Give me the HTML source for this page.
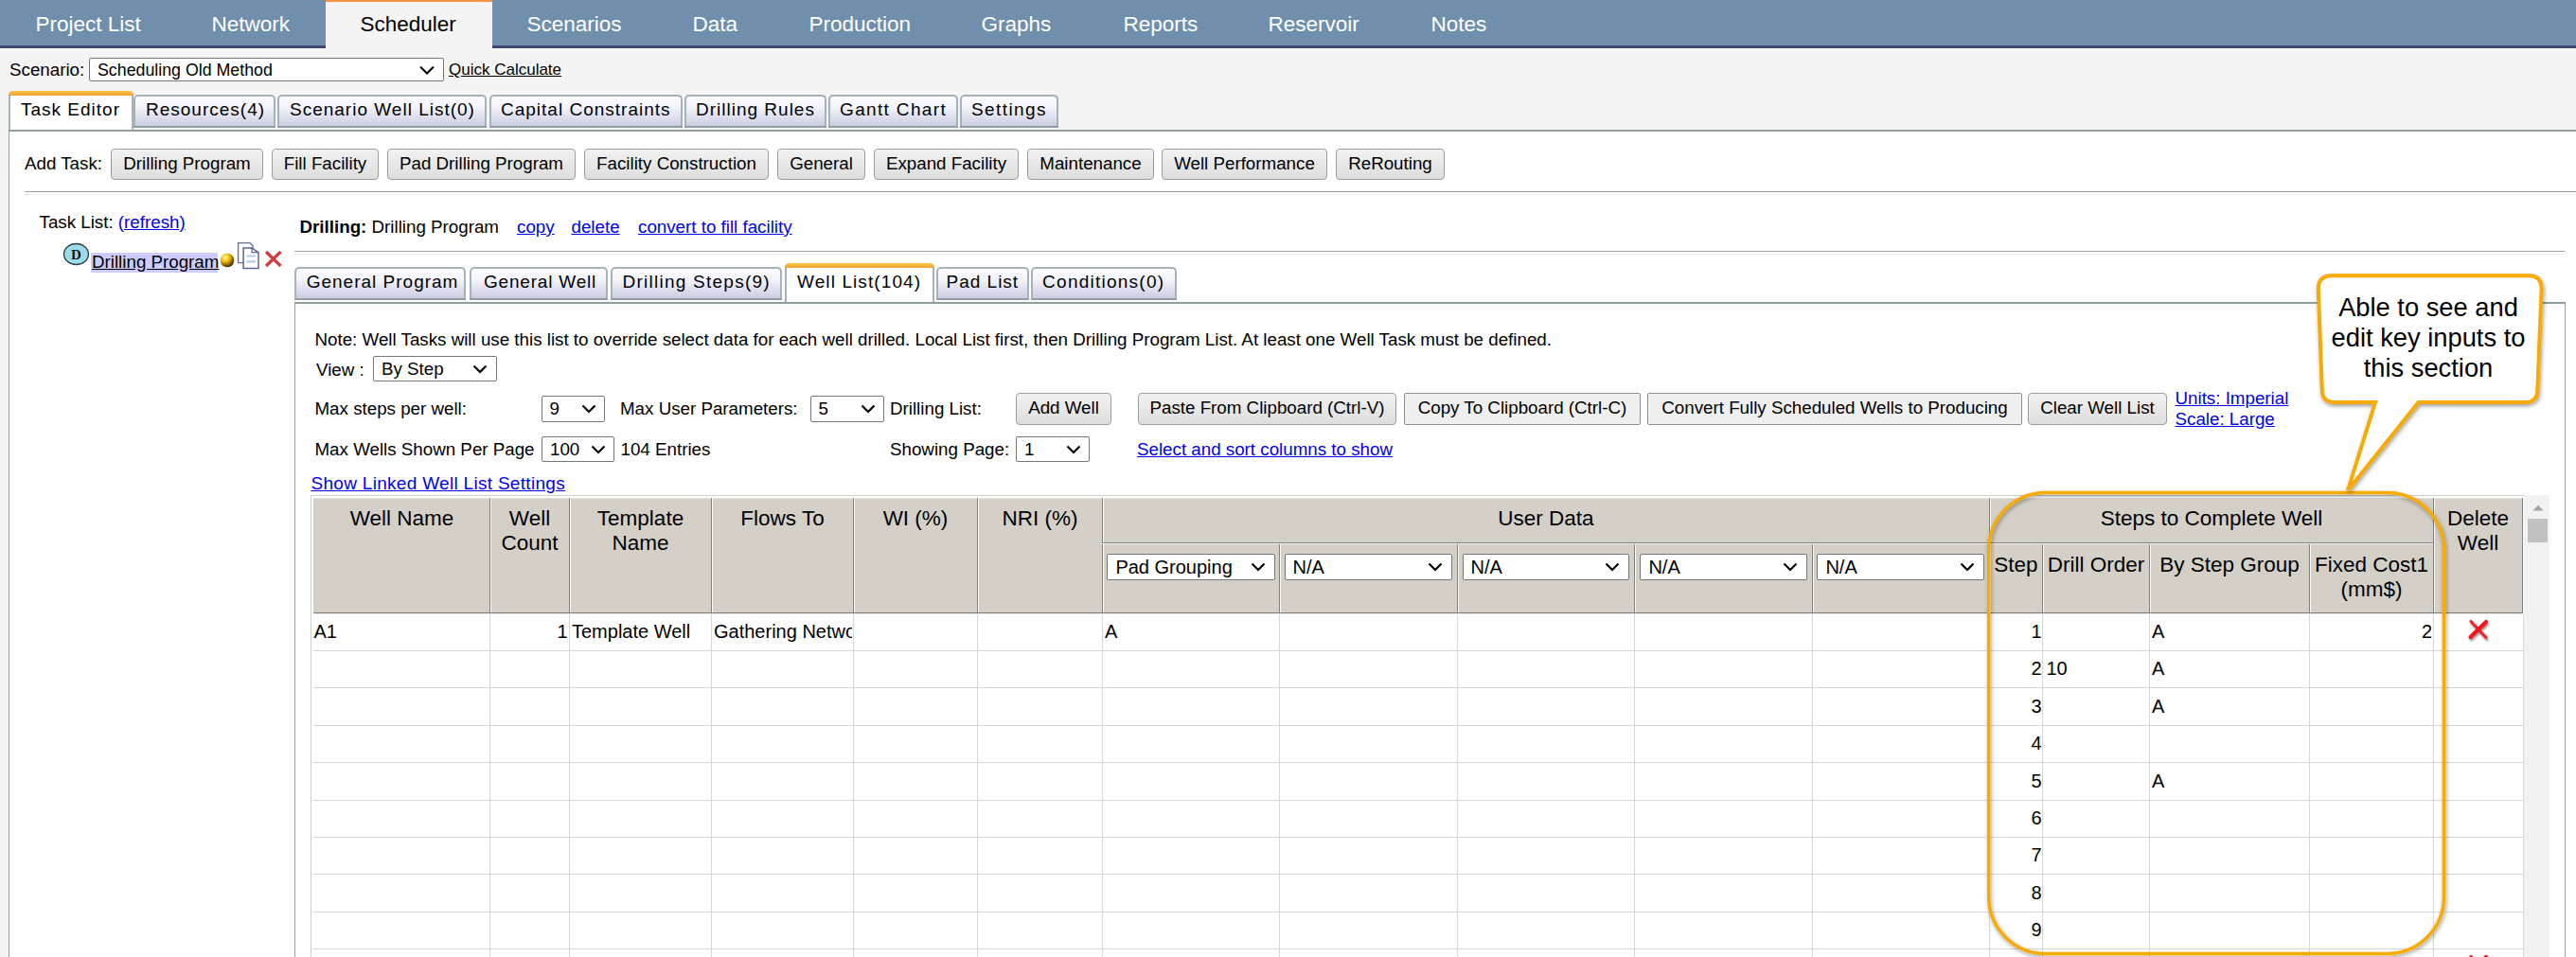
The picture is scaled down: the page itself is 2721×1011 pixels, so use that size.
<!DOCTYPE html>
<html><head><meta charset="utf-8">
<style>
*{box-sizing:border-box;margin:0;padding:0}
html,body{width:2721px;height:1011px;overflow:hidden;background:#f4f4f4;font-family:"Liberation Sans",sans-serif;color:#000}
.a{position:absolute}
.t{position:absolute;white-space:nowrap;line-height:1;font-size:18.75px}
.nav{font-size:22.5px;color:#fff;margin:1px 0 0 0.5px}
.tab{position:absolute;border:2px solid #a3b3b8;border-bottom:none;border-radius:5px 5px 0 0;background:linear-gradient(#fbfbff 0%,#f3f3fb 35%,#c7c8df 100%)}
.tab:after{content:"";position:absolute;left:-2px;right:-2px;bottom:0;height:2px;background:#8f9e9f}
.tabsel{position:absolute;border-left:2px solid #a3b3b8;border-right:2px solid #a3b3b8;background:#fff;border-radius:5px 5px 0 0}
.tabsel:before{content:"";position:absolute;left:-2px;right:-2px;top:0;height:5px;border-radius:5px 5px 0 0;background:linear-gradient(#f9c545,#f0a030)}
.tt{position:absolute;white-space:nowrap;line-height:1;font-size:19px;letter-spacing:1px}
.btn{position:absolute;border:1px solid #9d9d9d;border-radius:4px;background:linear-gradient(#f2f2f2,#dddddd);font-size:18.75px;display:flex;align-items:center;justify-content:center;white-space:nowrap;color:#000;padding-bottom:2px}
.btnf{position:absolute;border:1px solid #8f8f8f;border-radius:2px;background:#efefef;font-size:18.75px;display:flex;align-items:center;justify-content:center;white-space:nowrap;padding-bottom:2px}
.sel{position:absolute;border:1px solid #767676;border-radius:2px;background:#fff;font-size:18.75px;white-space:nowrap}
.sel span{position:absolute;top:50%;transform:translateY(-50%);line-height:1}
.sel svg{position:absolute;top:50%;margin-top:-5px}
.lnk{color:#0000ee;text-decoration:underline}
.hl{position:absolute;background:#a0a0a0}
</style></head><body>

<!-- NAV -->
<div class="a" style="left:0;top:0;width:2721px;height:48px;background:#6f8fac"></div>
<div class="a" style="left:0;top:48px;width:2721px;height:3px;background:#3b4a72"></div>
<div class="a" style="left:344px;top:0;width:176px;height:51px;background:#f4f4f4;border-top:2px solid #f39440"></div>
<span class="t nav" style="left:37px;top:14px">Project List</span>
<span class="t nav" style="left:223px;top:14px">Network</span>
<span class="t nav" style="left:380px;top:14px;color:#000">Scheduler</span>
<span class="t nav" style="left:556px;top:14px">Scenarios</span>
<span class="t nav" style="left:731px;top:14px">Data</span>
<span class="t nav" style="left:854px;top:14px">Production</span>
<span class="t nav" style="left:1036px;top:14px">Graphs</span>
<span class="t nav" style="left:1186px;top:14px">Reports</span>
<span class="t nav" style="left:1339px;top:14px">Reservoir</span>
<span class="t nav" style="left:1511px;top:14px">Notes</span>

<!-- SCENARIO ROW -->
<span class="t" style="left:10px;top:65px">Scenario:</span>
<div class="sel" style="left:94px;top:61px;width:375px;height:25px"><span style="left:8px;font-size:17.8px;margin-top:1px">Scheduling Old Method</span><svg style="right:9px" width="16" height="10" viewBox="0 0 16 10"><path d="M1 1.5 L8 8.5 L15 1.5" fill="none" stroke="#000" stroke-width="2"/></svg></div>
<span class="t" style="left:474px;top:65px;font-size:17px;text-decoration:underline">Quick Calculate</span>

<!-- TOP TABS -->
<div class="a" style="left:9px;top:137px;width:2712px;height:2px;background:#8f9e9f"></div>
<div class="a" style="left:9px;top:139px;width:2712px;height:872px;background:#fff;border-left:1px solid #a0a0a0"></div>
<div class="tabsel" style="left:9px;top:96px;width:132px;height:41px"></div>
<span class="tt" style="left:22px;top:106px">Task Editor</span>
<div class="tab" style="left:141px;top:100px;width:150px;height:35px"></div>
<span class="tt" style="left:154px;top:106px">Resources(4)</span>
<div class="tab" style="left:293px;top:100px;width:221px;height:35px"></div>
<span class="tt" style="left:306px;top:106px">Scenario Well List(0)</span>
<div class="tab" style="left:517px;top:100px;width:204px;height:35px"></div>
<span class="tt" style="left:529px;top:106px">Capital Constraints</span>
<div class="tab" style="left:723px;top:100px;width:150px;height:35px"></div>
<span class="tt" style="left:735px;top:106px">Drilling Rules</span>
<div class="tab" style="left:875px;top:100px;width:137px;height:35px"></div>
<span class="tt" style="left:887px;top:106px;letter-spacing:1.35px">Gantt Chart</span>
<div class="tab" style="left:1014px;top:100px;width:104px;height:35px"></div>
<span class="tt" style="left:1026px;top:106px;letter-spacing:1.4px">Settings</span>

<!-- ADD TASK -->
<span class="t" style="left:26px;top:164px">Add Task:</span>
<div class="btn" style="left:117px;top:157px;width:161px;height:33px">Drilling Program</div>
<div class="btn" style="left:287px;top:157px;width:113px;height:33px">Fill Facility</div>
<div class="btn" style="left:409px;top:157px;width:199px;height:33px">Pad Drilling Program</div>
<div class="btn" style="left:617px;top:157px;width:195px;height:33px">Facility Construction</div>
<div class="btn" style="left:821px;top:157px;width:93px;height:33px">General</div>
<div class="btn" style="left:923px;top:157px;width:153px;height:33px">Expand Facility</div>
<div class="btn" style="left:1085px;top:157px;width:134px;height:33px">Maintenance</div>
<div class="btn" style="left:1227px;top:157px;width:175px;height:33px">Well Performance</div>
<div class="btn" style="left:1411px;top:157px;width:115px;height:33px">ReRouting</div>
<div class="a" style="left:26px;top:202px;width:2695px;height:1px;background:#a0a0a0"></div>
<div class="a" style="left:26px;top:205px;width:2695px;height:1px;background:#ececec"></div>


<!--CONTENT-->
<span class="t" style="left:41.5px;top:225.5px">Task List: <span class="lnk">(refresh)</span></span>
<svg class="a" style="left:66px;top:255.5px" width="30" height="26" viewBox="0 0 30 26"><ellipse cx="14.5" cy="12.5" rx="13" ry="11" fill="#9cdcea" stroke="#2a3a3a" stroke-width="1.3"/><text x="14.5" y="17.5" text-anchor="middle" font-family="Liberation Serif" font-weight="bold" font-size="15" fill="#111">D</text></svg>
<div class="a" style="left:96px;top:267px;width:134px;height:21px;background:#ccccff"></div>
<span class="t" style="left:97px;top:267.5px;font-size:18.75px;text-decoration:underline">Drilling Program</span>
<svg class="a" style="left:232px;top:267px" width="16" height="16" viewBox="0 0 16 16"><defs><radialGradient id="yb" cx="0.36" cy="0.3" r="0.78"><stop offset="0" stop-color="#ffffff"/><stop offset="0.13" stop-color="#ffe46a"/><stop offset="0.42" stop-color="#f3b600"/><stop offset="0.75" stop-color="#7a5600"/><stop offset="1" stop-color="#0c0800"/></radialGradient></defs><circle cx="8" cy="8" r="7.3" fill="url(#yb)"/></svg>
<svg class="a" style="left:250px;top:255px" width="25" height="30" viewBox="0 0 25 30"><path d="M1.6 1.6 H14 L17 4.6 V22.6 H1.6 Z" fill="#fff" stroke="#6470a0" stroke-width="1.4"/><path d="M7.1 7.1 H16 L23 11.6 V28.6 H7.1 Z" fill="#fff" stroke="#5c6690" stroke-width="1.5"/><path d="M16 7.1 V11.6 H23" fill="none" stroke="#5c6690" stroke-width="1.2"/><path d="M10.5 15.5 H20 M10.5 21.3 H20" stroke="#b0cce6" stroke-width="2.2"/></svg>
<svg class="a" style="left:279px;top:264px" width="20" height="19" viewBox="0 0 20 19"><path d="M2 2 L17.5 17 M17.5 2 L2 17" stroke="#d23c3c" stroke-width="3.2"/></svg>
<span class="t" style="left:316.5px;top:230.5px"><b>Drilling:</b> Drilling Program</span>
<span class="t lnk" style="left:546px;top:230.5px">copy</span>
<span class="t lnk" style="left:603.5px;top:230.5px">delete</span>
<span class="t lnk" style="left:674px;top:230.5px">convert to fill facility</span>
<div class="a" style="left:311px;top:265px;width:2398px;height:1px;background:#a0a0a0"></div>
<div class="a" style="left:311px;top:268px;width:2398px;height:1px;background:#ececec"></div>
<div class="a" style="left:311px;top:319px;width:2399px;height:2px;background:#8f9e9f"></div>
<div class="a" style="left:311px;top:321px;width:1px;height:690px;background:#a0a0a0"></div>
<div class="a" style="left:2709px;top:321px;width:1px;height:690px;background:#a0a0a0"></div>
<div class="tab" style="left:311px;top:282px;width:181px;height:35px"></div>
<span class="tt" style="left:323.7px;top:288px;letter-spacing:1px">General Program</span>
<div class="tab" style="left:496px;top:282px;width:146px;height:35px"></div>
<span class="tt" style="left:511.0px;top:288px;letter-spacing:0.8px">General Well</span>
<div class="tab" style="left:645.4px;top:282px;width:180.60000000000002px;height:35px"></div>
<span class="tt" style="left:657.5px;top:288px;letter-spacing:1.25px">Drilling Steps(9)</span>
<div class="tabsel" style="left:828.5px;top:278px;width:158.0px;height:41px"></div>
<span class="tt" style="left:842.0px;top:288px;letter-spacing:1.1px">Well List(104)</span>
<div class="tab" style="left:988.5px;top:282px;width:98.09999999999991px;height:35px"></div>
<span class="tt" style="left:999.5px;top:288px;letter-spacing:1px">Pad List</span>
<div class="tab" style="left:1089.3px;top:282px;width:153.70000000000005px;height:35px"></div>
<span class="tt" style="left:1101.1px;top:288px;letter-spacing:1.25px">Conditions(0)</span>
<span class="t" style="left:332.5px;top:350px">Note: Well Tasks will use this list to override select data for each well drilled. Local List first, then Drilling Program List. At least one Well Task must be defined.</span>
<span class="t" style="left:334px;top:381.5px">View :</span>
<div class="sel" style="left:394px;top:376px;width:131px;height:27px"><span style="left:8px">By Step</span><svg style="right:9px" width="16" height="10" viewBox="0 0 16 10"><path d="M1.5 1.5 L8 8 L14.5 1.5" fill="none" stroke="#000" stroke-width="2.2"/></svg></div>
<span class="t" style="left:332.5px;top:423px">Max steps per well:</span>
<div class="sel" style="left:572px;top:418px;width:67px;height:28px"><span style="left:7.5px">9</span><svg style="right:8px" width="16" height="10" viewBox="0 0 16 10"><path d="M1.5 1.5 L8 8 L14.5 1.5" fill="none" stroke="#000" stroke-width="2.2"/></svg></div>
<span class="t" style="left:655px;top:423px">Max User Parameters:</span>
<div class="sel" style="left:856px;top:418px;width:78px;height:28px"><span style="left:7.5px">5</span><svg style="right:8px" width="16" height="10" viewBox="0 0 16 10"><path d="M1.5 1.5 L8 8 L14.5 1.5" fill="none" stroke="#000" stroke-width="2.2"/></svg></div>
<span class="t" style="left:940px;top:423px">Drilling List:</span>
<div class="btn" style="left:1073px;top:415px;width:101px;height:34px">Add Well</div>
<div class="btn" style="left:1202px;top:415px;width:273px;height:34px">Paste From Clipboard (Ctrl-V)</div>
<div class="btnf" style="left:1483px;top:415px;width:250px;height:34px">Copy To Clipboard (Ctrl-C)</div>
<div class="btnf" style="left:1740px;top:415px;width:396px;height:34px">Convert Fully Scheduled Wells to Producing</div>
<div class="btn" style="left:2142px;top:415px;width:147px;height:34px">Clear Well List</div>
<span class="t lnk" style="left:2297.5px;top:411.5px">Units: Imperial</span>
<span class="t lnk" style="left:2297.5px;top:433.5px">Scale: Large</span>
<span class="t" style="left:332.5px;top:465.5px">Max Wells Shown Per Page</span>
<div class="sel" style="left:572px;top:461px;width:77px;height:27px"><span style="left:8px">100</span><svg style="right:8px" width="16" height="10" viewBox="0 0 16 10"><path d="M1.5 1.5 L8 8 L14.5 1.5" fill="none" stroke="#000" stroke-width="2.2"/></svg></div>
<span class="t" style="left:655.5px;top:465.5px">104 Entries</span>
<span class="t" style="left:940px;top:466px">Showing Page:</span>
<div class="sel" style="left:1073px;top:461px;width:78px;height:27px"><span style="left:8px">1</span><svg style="right:8px" width="16" height="10" viewBox="0 0 16 10"><path d="M1.5 1.5 L8 8 L14.5 1.5" fill="none" stroke="#000" stroke-width="2.2"/></svg></div>
<span class="t lnk" style="left:1201px;top:466px">Select and sort columns to show</span>
<span class="t lnk" style="left:328.5px;top:501px;font-size:19px;letter-spacing:0.3px">Show Linked Well List Settings</span>
<!--/CONTENT-->
<!--TABLE-->
<div class="a" style="left:328px;top:523px;width:2338px;height:1px;background:#cfcfcf"></div>
<div class="a" style="left:328px;top:523px;width:1px;height:488px;background:#cfcfcf"></div>
<div class="a" style="left:331px;top:526px;width:2334px;height:122px;background:#d4d0c8"></div>
<div class="a" style="left:331px;top:647px;width:2334px;height:1px;background:#7f7f7f"></div>
<div class="a" style="left:331px;top:648px;width:2334px;height:1px;background:#ebe8e2"></div>
<div class="a" style="left:331px;top:526px;width:2334px;height:1px;background:#e4e2dc"></div>
<div class="a" style="left:517px;top:526px;width:1px;height:121px;background:#808080"></div>
<div class="a" style="left:518px;top:526px;width:1px;height:121px;background:#fbfaf8"></div>
<div class="a" style="left:601px;top:526px;width:1px;height:121px;background:#808080"></div>
<div class="a" style="left:602px;top:526px;width:1px;height:121px;background:#fbfaf8"></div>
<div class="a" style="left:751px;top:526px;width:1px;height:121px;background:#808080"></div>
<div class="a" style="left:752px;top:526px;width:1px;height:121px;background:#fbfaf8"></div>
<div class="a" style="left:901px;top:526px;width:1px;height:121px;background:#808080"></div>
<div class="a" style="left:902px;top:526px;width:1px;height:121px;background:#fbfaf8"></div>
<div class="a" style="left:1032px;top:526px;width:1px;height:121px;background:#808080"></div>
<div class="a" style="left:1033px;top:526px;width:1px;height:121px;background:#fbfaf8"></div>
<div class="a" style="left:1164px;top:526px;width:1px;height:121px;background:#808080"></div>
<div class="a" style="left:1165px;top:526px;width:1px;height:121px;background:#fbfaf8"></div>
<div class="a" style="left:2101px;top:526px;width:1px;height:121px;background:#808080"></div>
<div class="a" style="left:2102px;top:526px;width:1px;height:121px;background:#fbfaf8"></div>
<div class="a" style="left:2570px;top:526px;width:1px;height:121px;background:#808080"></div>
<div class="a" style="left:2571px;top:526px;width:1px;height:121px;background:#fbfaf8"></div>
<div class="a" style="left:2664px;top:526px;width:1px;height:121px;background:#808080"></div>
<div class="a" style="left:1351px;top:574px;width:1px;height:73px;background:#808080"></div>
<div class="a" style="left:1352px;top:574px;width:1px;height:73px;background:#fbfaf8"></div>
<div class="a" style="left:1539px;top:574px;width:1px;height:73px;background:#808080"></div>
<div class="a" style="left:1540px;top:574px;width:1px;height:73px;background:#fbfaf8"></div>
<div class="a" style="left:1726px;top:574px;width:1px;height:73px;background:#808080"></div>
<div class="a" style="left:1727px;top:574px;width:1px;height:73px;background:#fbfaf8"></div>
<div class="a" style="left:1914px;top:574px;width:1px;height:73px;background:#808080"></div>
<div class="a" style="left:1915px;top:574px;width:1px;height:73px;background:#fbfaf8"></div>
<div class="a" style="left:2157px;top:574px;width:1px;height:73px;background:#808080"></div>
<div class="a" style="left:2158px;top:574px;width:1px;height:73px;background:#fbfaf8"></div>
<div class="a" style="left:2270px;top:574px;width:1px;height:73px;background:#808080"></div>
<div class="a" style="left:2271px;top:574px;width:1px;height:73px;background:#fbfaf8"></div>
<div class="a" style="left:2439px;top:574px;width:1px;height:73px;background:#808080"></div>
<div class="a" style="left:2440px;top:574px;width:1px;height:73px;background:#fbfaf8"></div>
<div class="a" style="left:1164px;top:573px;width:1406px;height:1px;background:#808080"></div>
<div class="a" style="left:1164px;top:574px;width:1406px;height:1px;background:#f4f3f0"></div>
<div class="a h" style="left:332px;top:534.5px;width:185px;text-align:center;font-size:22.5px;line-height:26px;white-space:nowrap">Well Name</div>
<div class="a h" style="left:518px;top:534.5px;width:83px;text-align:center;font-size:22.5px;line-height:26px;white-space:nowrap">Well<br>Count</div>
<div class="a h" style="left:602px;top:534.5px;width:149px;text-align:center;font-size:22.5px;line-height:26px;white-space:nowrap">Template<br>Name</div>
<div class="a h" style="left:752px;top:534.5px;width:149px;text-align:center;font-size:22.5px;line-height:26px;white-space:nowrap">Flows To</div>
<div class="a h" style="left:902px;top:534.5px;width:130px;text-align:center;font-size:22.5px;line-height:26px;white-space:nowrap">WI (%)</div>
<div class="a h" style="left:1033px;top:534.5px;width:131px;text-align:center;font-size:22.5px;line-height:26px;white-space:nowrap">NRI (%)</div>
<div class="a h" style="left:1165px;top:534.5px;width:936px;text-align:center;font-size:22.5px;line-height:26px;white-space:nowrap">User Data</div>
<div class="a h" style="left:2102px;top:534.5px;width:468px;text-align:center;font-size:22.5px;line-height:26px;white-space:nowrap">Steps to Complete Well</div>
<div class="a h" style="left:2571px;top:534.5px;width:93px;text-align:center;font-size:22.5px;line-height:26px;white-space:nowrap">Delete<br>Well</div>
<div class="a h" style="left:2102px;top:583.5px;width:55px;text-align:center;font-size:22.5px;line-height:26px;white-space:nowrap">Step</div>
<div class="a h" style="left:2158px;top:583.5px;width:112px;text-align:center;font-size:22.5px;line-height:26px;white-space:nowrap">Drill Order</div>
<div class="a h" style="left:2271px;top:583.5px;width:168px;text-align:center;font-size:22.5px;line-height:26px;white-space:nowrap">By Step Group</div>
<div class="a h" style="left:2440px;top:583.5px;width:130px;text-align:center;font-size:22.5px;line-height:26px;white-space:nowrap">Fixed Cost1<br>(mm$)</div>
<div class="sel" style="left:1169.4px;top:585px;width:177.2px;height:28px;font-size:20px"><span style="left:8px">Pad Grouping</span><svg style="right:9px" width="16" height="10" viewBox="0 0 16 10"><path d="M1.5 1.5 L8 8 L14.5 1.5" fill="none" stroke="#000" stroke-width="2.2"/></svg></div>
<div class="sel" style="left:1356.6px;top:585px;width:177.4px;height:28px;font-size:20px"><span style="left:8px">N/A</span><svg style="right:9px" width="16" height="10" viewBox="0 0 16 10"><path d="M1.5 1.5 L8 8 L14.5 1.5" fill="none" stroke="#000" stroke-width="2.2"/></svg></div>
<div class="sel" style="left:1544.5px;top:585px;width:176.9px;height:28px;font-size:20px"><span style="left:8px">N/A</span><svg style="right:9px" width="16" height="10" viewBox="0 0 16 10"><path d="M1.5 1.5 L8 8 L14.5 1.5" fill="none" stroke="#000" stroke-width="2.2"/></svg></div>
<div class="sel" style="left:1732.4px;top:585px;width:176.6px;height:28px;font-size:20px"><span style="left:8px">N/A</span><svg style="right:9px" width="16" height="10" viewBox="0 0 16 10"><path d="M1.5 1.5 L8 8 L14.5 1.5" fill="none" stroke="#000" stroke-width="2.2"/></svg></div>
<div class="sel" style="left:1919.4px;top:585px;width:176.6px;height:28px;font-size:20px"><span style="left:8px">N/A</span><svg style="right:9px" width="16" height="10" viewBox="0 0 16 10"><path d="M1.5 1.5 L8 8 L14.5 1.5" fill="none" stroke="#000" stroke-width="2.2"/></svg></div>
<div class="a" style="left:331px;top:687.0px;width:2334px;height:1px;background:#d6d6d6"></div>
<div class="a" style="left:331px;top:726.4px;width:2334px;height:1px;background:#d6d6d6"></div>
<div class="a" style="left:331px;top:765.8px;width:2334px;height:1px;background:#d6d6d6"></div>
<div class="a" style="left:331px;top:805.2px;width:2334px;height:1px;background:#d6d6d6"></div>
<div class="a" style="left:331px;top:844.6px;width:2334px;height:1px;background:#d6d6d6"></div>
<div class="a" style="left:331px;top:884.0px;width:2334px;height:1px;background:#d6d6d6"></div>
<div class="a" style="left:331px;top:923.4px;width:2334px;height:1px;background:#d6d6d6"></div>
<div class="a" style="left:331px;top:962.8px;width:2334px;height:1px;background:#d6d6d6"></div>
<div class="a" style="left:331px;top:1002.2px;width:2334px;height:1px;background:#d6d6d6"></div>
<div class="a" style="left:517px;top:649px;width:1px;height:362px;background:#d6d6d6"></div>
<div class="a" style="left:601px;top:649px;width:1px;height:362px;background:#d6d6d6"></div>
<div class="a" style="left:751px;top:649px;width:1px;height:362px;background:#d6d6d6"></div>
<div class="a" style="left:901px;top:649px;width:1px;height:362px;background:#d6d6d6"></div>
<div class="a" style="left:1032px;top:649px;width:1px;height:362px;background:#d6d6d6"></div>
<div class="a" style="left:1164px;top:649px;width:1px;height:362px;background:#d6d6d6"></div>
<div class="a" style="left:2101px;top:649px;width:1px;height:362px;background:#d6d6d6"></div>
<div class="a" style="left:2570px;top:649px;width:1px;height:362px;background:#d6d6d6"></div>
<div class="a" style="left:1351px;top:649px;width:1px;height:362px;background:#d6d6d6"></div>
<div class="a" style="left:1539px;top:649px;width:1px;height:362px;background:#d6d6d6"></div>
<div class="a" style="left:1726px;top:649px;width:1px;height:362px;background:#d6d6d6"></div>
<div class="a" style="left:1914px;top:649px;width:1px;height:362px;background:#d6d6d6"></div>
<div class="a" style="left:2157px;top:649px;width:1px;height:362px;background:#d6d6d6"></div>
<div class="a" style="left:2270px;top:649px;width:1px;height:362px;background:#d6d6d6"></div>
<div class="a" style="left:2439px;top:649px;width:1px;height:362px;background:#d6d6d6"></div>
<div class="a" style="left:2665px;top:649px;width:1px;height:362px;background:#d6d6d6"></div>
<span class="t" style="left:331.5px;top:656.9px;font-size:20px">A1</span>
<span class="t" style="left:499.5px;width:100px;text-align:right;top:656.9px;font-size:20px">1</span>
<span class="t" style="left:604px;top:656.9px;font-size:20px">Template Well</span>
<div class="a" style="left:752px;top:648px;width:148px;height:38px;overflow:hidden"><span class="t" style="left:2px;top:8.9px;font-size:20px">Gathering Network</span></div>
<span class="t" style="left:1167px;top:656.9px;font-size:20px">A</span>
<span class="t" style="left:2056.5px;width:100px;text-align:right;top:656.9px;font-size:20px">1</span>
<span class="t" style="left:2056.5px;width:100px;text-align:right;top:696.3px;font-size:20px">2</span>
<span class="t" style="left:2056.5px;width:100px;text-align:right;top:735.7px;font-size:20px">3</span>
<span class="t" style="left:2056.5px;width:100px;text-align:right;top:775.1px;font-size:20px">4</span>
<span class="t" style="left:2056.5px;width:100px;text-align:right;top:814.5px;font-size:20px">5</span>
<span class="t" style="left:2056.5px;width:100px;text-align:right;top:853.9px;font-size:20px">6</span>
<span class="t" style="left:2056.5px;width:100px;text-align:right;top:893.3px;font-size:20px">7</span>
<span class="t" style="left:2056.5px;width:100px;text-align:right;top:932.7px;font-size:20px">8</span>
<span class="t" style="left:2056.5px;width:100px;text-align:right;top:972.1px;font-size:20px">9</span>
<span class="t" style="left:2161.5px;top:696.3px;font-size:20px">10</span>
<span class="t" style="left:2273px;top:656.9px;font-size:20px">A</span>
<span class="t" style="left:2273px;top:696.3px;font-size:20px">A</span>
<span class="t" style="left:2273px;top:735.7px;font-size:20px">A</span>
<span class="t" style="left:2273px;top:814.5px;font-size:20px">A</span>
<span class="t" style="left:2469px;width:100px;text-align:right;top:656.9px;font-size:20px">2</span>
<svg class="a" style="left:2606px;top:653px" width="26" height="26" viewBox="0 0 26 26"><defs><filter id="sh653" x="-30%" y="-30%" width="160%" height="160%"><feGaussianBlur in="SourceAlpha" stdDeviation="1"/><feOffset dx="1" dy="1.5"/><feComponentTransfer><feFuncA type="linear" slope="0.45"/></feComponentTransfer><feMerge><feMergeNode/><feMergeNode in="SourceGraphic"/></feMerge></filter></defs><g filter="url(#sh653)"><path d="M4 3.5 L20 20.5" stroke="#f8202c" stroke-width="3.1" stroke-linecap="round"/><path d="M3.5 20 L20 4" stroke="#f0141e" stroke-width="4.2" stroke-linecap="round"/></g></svg>
<svg class="a" style="left:2606px;top:1007px" width="26" height="26" viewBox="0 0 26 26"><defs><filter id="sh1007" x="-30%" y="-30%" width="160%" height="160%"><feGaussianBlur in="SourceAlpha" stdDeviation="1"/><feOffset dx="1" dy="1.5"/><feComponentTransfer><feFuncA type="linear" slope="0.45"/></feComponentTransfer><feMerge><feMergeNode/><feMergeNode in="SourceGraphic"/></feMerge></filter></defs><g filter="url(#sh1007)"><path d="M4 3.5 L20 20.5" stroke="#f8202c" stroke-width="3.1" stroke-linecap="round"/><path d="M3.5 20 L20 4" stroke="#f0141e" stroke-width="4.2" stroke-linecap="round"/></g></svg>
<div class="a" style="left:2666px;top:523px;width:27px;height:488px;background:#f1f1f1"></div>
<svg class="a" style="left:2674px;top:532px" width="14" height="9" viewBox="0 0 14 9"><path d="M1.5 7.5 L7 1.5 L12.5 7.5 Z" fill="#a3a3a3"/></svg>
<div class="a" style="left:2670px;top:548px;width:21px;height:25px;background:#c1c1c1"></div>
<!--/TABLE-->
<!--CALLOUT-->
<svg class="a" style="left:0;top:0" width="2721" height="1011" viewBox="0 0 2721 1011">
<defs>
<filter id="dsh" x="-10%" y="-10%" width="120%" height="120%"><feGaussianBlur in="SourceAlpha" stdDeviation="2"/><feOffset dx="0.8" dy="2"/><feComponentTransfer><feFuncA type="linear" slope="0.4"/></feComponentTransfer><feMerge><feMergeNode/><feMergeNode in="SourceGraphic"/></feMerge></filter>
</defs>
<rect filter="url(#dsh)" x="2100.7" y="520.5" width="480.8" height="487" rx="60" ry="60" fill="none" stroke="#f7aa00" stroke-width="3.5"/>
<path filter="url(#dsh)" d="M2463 291.2 L2671 291.2 Q2684.6 291.2 2684.6 305 L2680.3 412 Q2680 425 2667 425 L2554.5 425 L2480 518 L2509 425 L2466 425 Q2453 425 2452.8 412 L2448.8 305 Q2448.8 291.2 2463 291.2 Z" fill="#fff" stroke="#f7aa00" stroke-width="4" stroke-linejoin="miter"/>
</svg>
<div class="a" style="left:2447px;top:308.5px;width:236px;text-align:center;font-size:27.3px;line-height:32px;white-space:nowrap">Able to see and<br>edit key inputs to<br>this section</div>
<!--/CALLOUT-->
</body></html>
